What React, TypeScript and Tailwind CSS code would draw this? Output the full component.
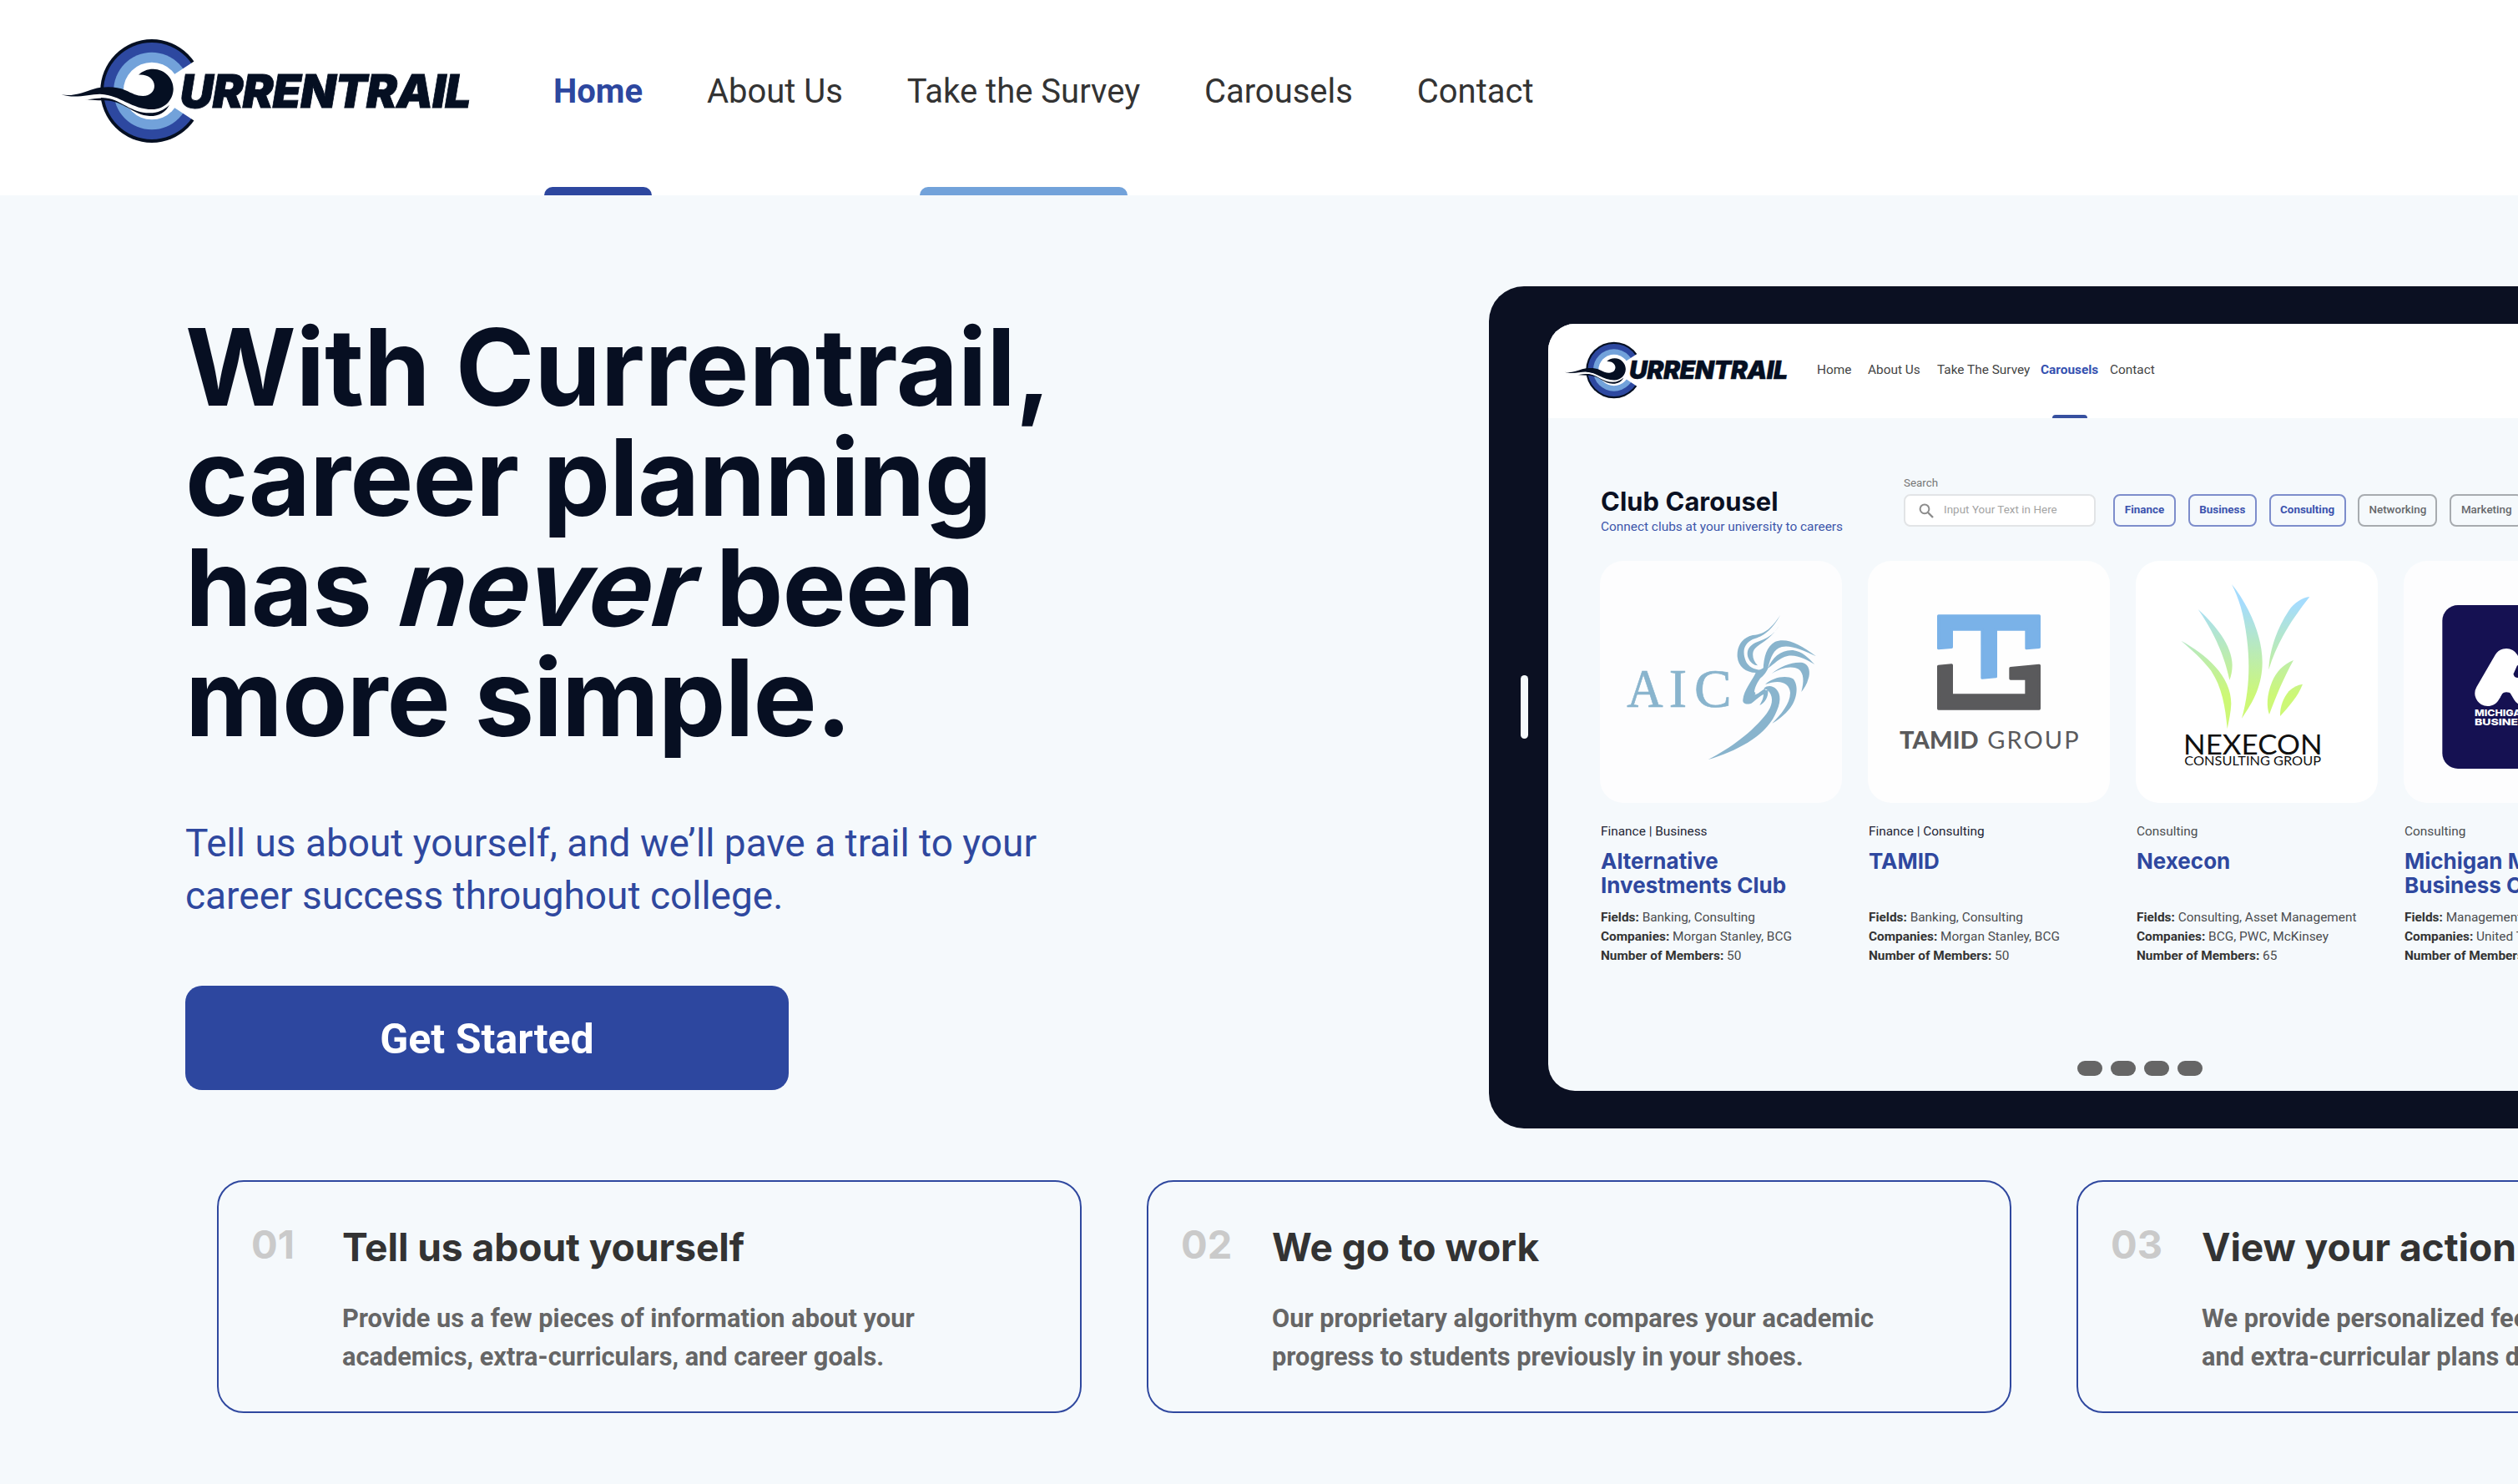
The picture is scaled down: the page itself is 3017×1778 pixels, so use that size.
import type { ReactNode } from "react";

const NAVY = "#050f22";

function Logo({ className }: { className: string }) {
  return (
    <svg viewBox="0 0 540 170" className={className} aria-label="Currentrail">
      <g transform="scale(0.34436 0.33333)">
        <ellipse cx="383" cy="267" rx="179" ry="186" fill={NAVY} />
        <ellipse cx="383" cy="267" rx="168" ry="174" fill="#2d48a0" />
        <ellipse cx="383" cy="267" rx="133" ry="139" fill="#72a2da" />
        <ellipse cx="383" cy="267" rx="99" ry="103" fill="#fff" />
        <path d="M440 222 L467 203 L582 125 V409 L467 331 L440 312Z" fill="#fff" />
        <path d="M150 292 C185 276 240 284 275 304 C310 326 335 345 380 344 C410 343 428 332 445 316" fill="none" stroke="#fff" strokeWidth="14" />
        <path
          d="M68 280 C110 288 150 270 180 260 C215 250 260 250 290 264 C315 275 330 285 352 285 C378 284 392 268 392 248 C391 222 366 206 337 209 C349 196 367 188 388 188 C428 188 458 222 458 260 C457 302 424 333 385 333 C312 333 275 282 205 278 C165 277 120 297 68 280Z"
          fill={NAVY}
        />
        <path
          d="M148 300 C180 294 205 291 228 293 C275 299 312 346 375 346 C405 346 425 335 444 317 C432 344 405 358 375 357 C318 355 285 300 215 301 C190 302 168 296 148 300Z"
          fill={NAVY}
        />
      </g>
      <text x="165.5" y="109" fontFamily="Inter, sans-serif" fontWeight="900" fontStyle="italic" fontSize="55.5" textLength="349" fill={NAVY} stroke={NAVY} strokeWidth="0.8">
        URRENTRAIL
      </text>
    </svg>
  );
}

function NavItem({ children, active, bar }: { children: ReactNode; active?: boolean; bar?: string }) {
  return (
    <div className="relative flex h-full justify-center pt-[86px]">
      <span className={active ? "font-bold text-[#2d479f]" : "text-[#333]"}>{children}</span>
      {bar && <span className={`absolute bottom-0 h-2.5 rounded-t-[10px] ${bar}`} />}
    </div>
  );
}

function AicArt() {
  return (
    <svg viewBox="51 36 870 870" className="size-full">
      <g fill="#89b4cd">
        <path d="M700 230 C668 275 650 298 600 303 C560 312 543 345 545 380 C548 415 575 437 612 438 L645 426 C615 432 585 420 575 395 C562 360 568 335 600 318 C640 305 665 290 700 230Z" />
        <path d="M695 270 C670 310 640 318 610 330 C585 342 577 362 583 382 C590 402 605 412 618 412 C603 398 598 378 602 362 C612 335 655 330 695 270Z" />
        <path d="M612 436 C600 465 568 500 565 535 C563 548 575 553 590 550 C605 545 612 530 640 515 C645 508 647 500 646 494 C630 502 620 515 607 517 C603 500 612 480 627 458 C645 445 652 430 657 418 L640 420Z" />
        <path d="M640 494 C655 482 672 485 685 497 C702 515 703 545 680 590 C640 670 540 720 440 750 C520 710 600 650 650 585 C670 558 676 530 660 508 C655 500 648 496 640 494Z" />
        <path d="M638 428 C640 380 650 345 680 327 C720 310 770 335 828 379 C780 355 735 338 705 345 C675 352 664 385 655 420Z" />
        <path d="M655 422 C670 385 700 355 745 357 C780 362 800 385 823 408 C790 390 760 372 725 378 C695 385 680 405 655 422Z" />
        <path d="M668 442 C700 415 740 398 780 402 C805 408 808 440 800 460 C795 480 785 495 775 507 C785 470 785 440 765 425 C740 412 700 420 668 442Z" />
        <path d="M645 480 C670 455 720 445 745 460 C765 480 762 530 735 565 C715 590 690 610 670 620 C700 590 735 550 735 510 C732 475 700 460 645 480Z" />
        <path d="M625 555 C636 538 642 520 638 502 L655 500 C657 525 645 545 625 555Z" />
      </g>
      <circle cx="606" cy="512" r="4" fill="#89b4cd" />
      <g fontFamily="'Liberation Serif', serif" fontSize="196" fill="#89b4cd" stroke="#89b4cd" strokeWidth="2">
        <text x="148" y="561" textLength="130" lengthAdjust="spacingAndGlyphs">A</text>
        <text x="299" y="561" textLength="64" lengthAdjust="spacingAndGlyphs">I</text>
        <text x="390" y="561" textLength="134" lengthAdjust="spacingAndGlyphs">C</text>
      </g>
    </svg>
  );
}

function TamidArt() {
  return (
    <svg viewBox="24 36 870 870" className="size-full">
      <g strokeLinejoin="round" strokeWidth="10">
        <path d="M278 234 H640 V346 L594 350 V282 H484 V452 L435 456 V282 H325 V346 L278 350Z" fill="#7ab2e8" stroke="#7ab2e8" />
        <path d="M278 415 L325 411 V519 H594 V459 H537 V422 L640 412 V567 H278Z" fill="#5a5a5c" stroke="#5a5a5c" />
      </g>
      <g fontFamily="Lato, sans-serif" fontSize="87" fill="#5a5a5c">
        <text x="138" y="710" fontWeight="900" textLength="284">TAMID</text>
        <text x="454" y="710" fontWeight="400" textLength="328">GROUP</text>
      </g>
    </svg>
  );
}

function NexeconArt() {
  return (
    <svg viewBox="30 36 870 870" className="size-full">
      <defs>
        <linearGradient id="reed" gradientUnits="userSpaceOnUse" x1="0" y1="190" x2="0" y2="520">
          <stop offset="0" stopColor="#a5dcfd" />
          <stop offset="1" stopColor="#cdf876" />
        </linearGradient>
      </defs>
      <g fill="url(#reed)">
        <path d="M375 120 C440 200 485 310 485 400 C485 480 455 540 411 602 C440 500 440 400 430 320 C420 230 400 170 375 120Z" />
        <path d="M254 210 C320 270 375 340 377 410 C377 430 373 450 367 464 C350 380 310 290 254 210Z" />
        <path d="M193 323 C280 370 375 450 373 550 C372 580 365 610 359 640 C352 560 340 490 300 430 C270 390 230 355 193 323Z" />
        <path d="M655 165 C600 235 540 320 508 427 C510 370 530 290 580 215 C600 185 630 168 655 165Z" />
        <path d="M597 393 C565 450 535 520 510 588 C500 560 500 520 520 470 C535 435 560 408 597 393Z" />
        <path d="M630 479 C615 520 580 560 549 594 C548 560 560 530 580 505 C595 490 612 482 630 479Z" />
      </g>
      <g fontFamily="Lato, sans-serif" fill="#111">
        <text x="201" y="731" fontSize="99" textLength="500" lengthAdjust="spacingAndGlyphs">NEXECON</text>
        <text x="205" y="770" fontSize="44" textLength="491" lengthAdjust="spacingAndGlyphs">CONSULTING GROUP</text>
      </g>
    </svg>
  );
}

function MichiganArt() {
  return (
    <svg viewBox="993 36 870 870" className="size-full">
      <rect x="1132" y="195" width="590" height="588" rx="56" fill="#151152" />
      <path d="M1295 512 L1362 397 L1430 512 M1505 512 V397 L1430 512" fill="none" stroke="#fff" strokeWidth="92" strokeLinecap="round" strokeLinejoin="round" />
      <path d="M1330 440 H1394 V530 Q1384 508 1362 508 Q1344 508 1338 530Z" fill="#fff" />
      <path d="M1401 412 L1388 442 Q1388 454 1401 456 H1420 V412Z" fill="#151152" />
      <g fontFamily="Inter, sans-serif" fontWeight="800" fontSize="33" fill="#fff">
        <text x="1248" y="594" textLength="196" lengthAdjust="spacingAndGlyphs">MICHIGAN</text>
        <text x="1248" y="627" textLength="212" lengthAdjust="spacingAndGlyphs">BUSINESS</text>
      </g>
    </svg>
  );
}

const clubs = [
  { tag: "Finance | Business", dark: true, name: ["Alternative", "Investments Club"], fields: "Banking, Consulting", companies: "Morgan Stanley, BCG", members: "50", art: <AicArt />, bg: "bg-[#fdfdfe]" },
  { tag: "Finance | Consulting", dark: true, name: ["TAMID"], fields: "Banking, Consulting", companies: "Morgan Stanley, BCG", members: "50", art: <TamidArt />, bg: "bg-[#fefefe]" },
  { tag: "Consulting", dark: false, name: ["Nexecon"], fields: "Consulting, Asset Management", companies: "BCG, PWC, McKinsey", members: "65", art: <NexeconArt />, bg: "bg-white" },
  { tag: "Consulting", dark: false, name: ["Michigan Music", "Business Club"], fields: "Management", companies: "United Talent", members: "40", art: <MichiganArt />, bg: "bg-[#fdfdfe]" },
];

const chips = [
  { label: "Finance", w: "w-[75px]", on: true },
  { label: "Business", w: "w-[82px]", on: true },
  { label: "Consulting", w: "w-[92px]", on: true },
  { label: "Networking", w: "w-[95px]", on: false },
  { label: "Marketing", w: "w-[88px]", on: false },
];

const steps = [
  { n: "01", title: "Tell us about yourself", body: ["Provide us a few pieces of information about your", "academics, extra-curriculars, and career goals."] },
  { n: "02", title: "We go to work", body: ["Our proprietary algorithym compares your academic", "progress to students previously in your shoes."] },
  { n: "03", title: "View your action plan", body: ["We provide personalized feedback", "and extra-curricular plans designed"] },
];

function Tablet() {
  return (
    <div className="relative mt-[109px] ml-[839px] flex h-[1009px] w-[1500px] shrink-0 rounded-[42px] bg-[#0b1022] py-[45px] pl-[71px]">
      <span className="absolute top-[466px] left-[38px] h-[76px] w-[9px] rounded-full bg-[#f5f9fc]" />
      <div className="flex w-[1358px] flex-col overflow-hidden rounded-[32px] bg-[#f5f9fc]">
        <div className="flex h-[113px] shrink-0 bg-white text-[15.4px] leading-[20px] text-[#444]">
          <Logo className="mt-[7px] ml-[7px] h-[92.6px] w-[294px] shrink-0" />
          <div className="flex pt-[45px]">
            <span className="ml-[21px] w-[61px]">Home</span>
            <span className="w-[83px]">About Us</span>
            <span className="w-[124px]">Take The Survey</span>
            <span className="relative h-[68px] w-[83px] font-bold text-[#3450b0]">
              Carousels
              <span className="absolute bottom-0 left-[14px] h-1 w-[42px] rounded-t-[4px] bg-[#37509f]" />
            </span>
            <span>Contact</span>
          </div>
        </div>
        <div className="mt-[67px] ml-[63px] flex items-start">
          <div className="w-[363px] pt-[15px]">
            <h2 className="font-['Inter'] text-[30.8px] leading-[36px] font-bold tracking-[0.1px] text-[#0a1022]">Club Carousel</h2>
            <p className="mt-px text-[15.4px] leading-[22px] text-[#3d56ab]">Connect clubs at your university to careers</p>
          </div>
          <div>
            <p className="h-6 text-[13.4px] leading-[22px] text-[#777]">Search</p>
            <div className="flex h-[39px] w-[230px] items-center rounded-[8px] border-2 border-[#e2e4e6] bg-white pl-4 text-[13.4px] text-[#a3a3a3]">
              <svg viewBox="0 0 18 18" className="mr-3 size-[18px]" fill="none" stroke="#8c8c8c" strokeWidth="2">
                <circle cx="7" cy="6.8" r="5.4" />
                <path d="M11 11 L17 17" strokeWidth="2.4" />
              </svg>
              <span className="tracking-[0.04px]">Input Your Text in Here</span>
            </div>
          </div>
          <div className="mt-6 ml-[21px] flex gap-[14.8px] text-[13.4px]">
            {chips.map((c) => (
              <span
                key={c.label}
                className={`flex h-[39px] items-center justify-center rounded-[8px] border-2 ${c.w} ${c.on ? "border-[#7d8dcb] font-bold text-[#3b53ae]" : "border-[#a7abaf] font-medium text-[#66686b]"}`}
              >
                {c.label}
              </span>
            ))}
          </div>
        </div>
        <div className="mt-[30px] ml-[62px] flex gap-[31px]">
          {clubs.map((c) => (
            <div key={c.name[0]} className="w-[290px] shrink-0 text-[15.4px] leading-[23px] whitespace-nowrap text-[#4b4d50]">
              <div className={`size-[290px] rounded-[28px] ${c.bg}`}>{c.art}</div>
              <p className={`mt-[23px] ml-px ${c.dark ? "text-[#1e2535]" : ""}`}>{c.tag}</p>
              <h3 className="mt-[9px] ml-px h-[71px] font-['Inter'] text-[26px] leading-[29px] font-bold text-[#2f489f]">
                {c.name.map((l) => (
                  <span key={l} className="block">{l}</span>
                ))}
              </h3>
              <div className="ml-px">
                <p><b className="text-[#333]">Fields:</b> {c.fields}</p>
                <p><b className="text-[#333]">Companies:</b> {c.companies}</p>
                <p><b className="text-[#333]">Number of Members:</b> {c.members}</p>
              </div>
            </div>
          ))}
        </div>
        <div className="mt-auto mb-[18px] ml-[634px] flex gap-2.5">
          {[0, 1, 2, 3].map((i) => (
            <span key={i} className="h-[18px] w-[30px] rounded-full bg-[#666]" />
          ))}
        </div>
      </div>
    </div>
  );
}

export default function App() {
  return (
    <div className="flex h-[1778px] w-[3017px] flex-col overflow-hidden bg-[#f5f9fc] font-['Roboto',sans-serif]">
      <header className="flex h-[234px] shrink-0 bg-white text-[40px] leading-[47px]">
        <Logo className="mt-5 ml-[50px] h-[170px] w-[540px] shrink-0" />
        <nav className="ml-[73px] flex h-full gap-[76.8px]">
          <NavItem active bar="w-[129px] bg-[#2d479f]">Home</NavItem>
          <NavItem>About Us</NavItem>
          <NavItem bar="w-[249px] bg-[#72a2da]">Take the Survey</NavItem>
          <NavItem>Carousels</NavItem>
          <NavItem>Contact</NavItem>
        </nav>
      </header>

      <section className="flex shrink-0">
        <div className="w-[1100px] shrink-0 pl-[222px] whitespace-nowrap">
          <div className="w-[723px]">
            <h1 className="pt-[140px] font-['Inter'] text-[128px] leading-[132px] font-bold tracking-[-0.9px] text-[#070f22]">
              <span className="tracking-[-0.2px]">With Currentrail,</span><br />
              career planning<br />
              has <em className="inline-block origin-[50%_75%] -skew-x-[15deg] tracking-[-0.5px] not-italic">never</em> been<br />
              more simple.
            </h1>
            <p className="mt-[77px] text-[46px] leading-[63px] text-[#2f489f]">
              Tell us about yourself, and we’ll pave a trail to your<br />career success throughout college.
            </p>
            <button className="mt-[76px] h-[125px] w-full rounded-[20px] bg-[#2d479f] pt-1 text-[50px] font-bold text-white">Get Started</button>
          </div>
        </div>
        <div className="-ml-[155px]">
          <Tablet />
        </div>
      </section>

      <section className="mt-[62px] ml-[260px] flex gap-[78px]">
        {steps.map((s) => (
          <div key={s.n} className="flex h-[279px] w-[1036px] shrink-0 rounded-[32px] border-2 border-[#2f489f] pl-[39px] whitespace-nowrap">
            <span className="w-[109px] pt-[46px] font-['Inter'] text-[47px] leading-[58px] font-bold text-[#cacaca]">{s.n}</span>
            <div>
              <h3 className="pt-[50px] font-['Inter'] text-[46.2px] leading-[56px] font-bold tracking-[-0.1px] text-[#333]">{s.title}</h3>
              <p className="mt-[35px] text-[30.75px] leading-[46px] font-bold text-[#666]">
                {s.body[0]}<br />{s.body[1]}
              </p>
            </div>
          </div>
        ))}
      </section>
    </div>
  );
}
